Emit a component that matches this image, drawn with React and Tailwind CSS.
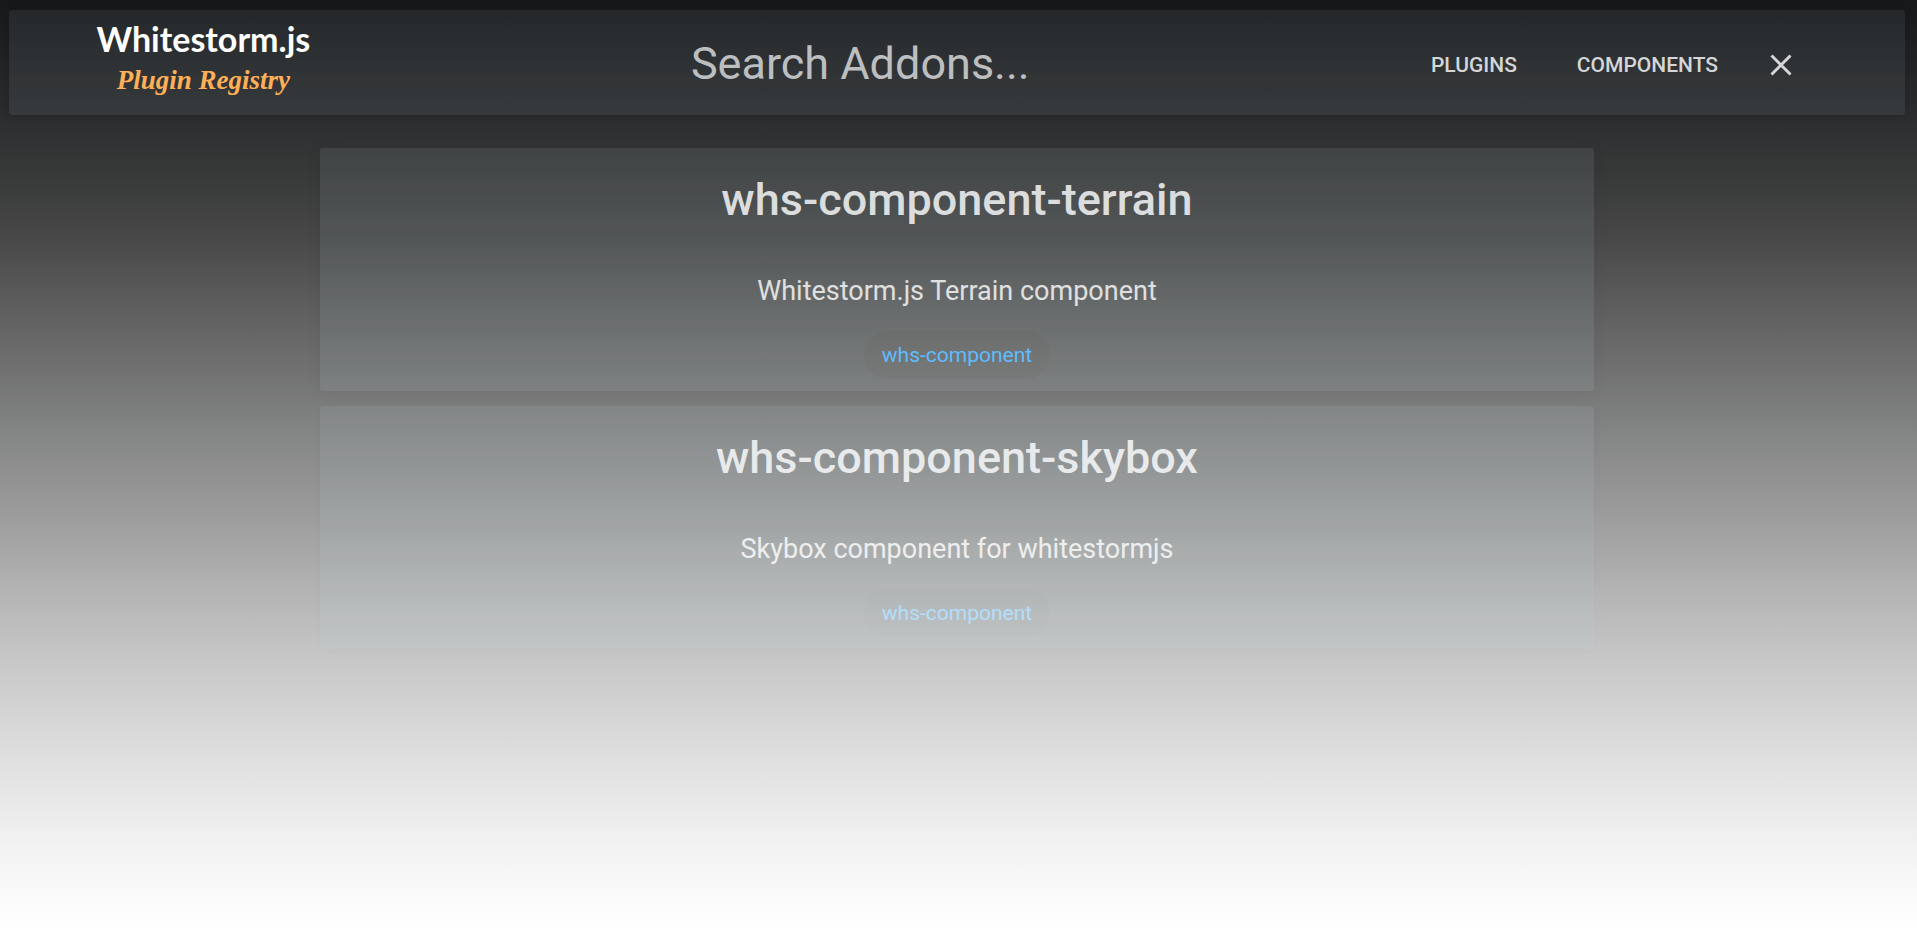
import React from "react";

const addons = [
  {
    name: "whs-component-terrain",
    description: "Whitestorm.js Terrain component",
    tag: "whs-component",
    shadow: "shadow-[0_0_16px_rgba(0,0,0,0.06)]",
    tagStyle: "bg-[#503c3c]/6 text-[#5ebdff]",
  },
  {
    name: "whs-component-skybox",
    description: "Skybox component for whitestormjs",
    tag: "whs-component",
    shadow: "shadow-[0_0_16px_rgba(0,0,0,0.02)]",
    tagStyle: "bg-[#a09c9c]/4 text-[#b2dffc]",
  },
];

function Logo() {
  return (
    <a href="#home" className="flex flex-col items-center whitespace-nowrap">
      <span className="font-['Lato','Open_Sans',sans-serif] text-[34px] leading-[40px] font-bold text-white">
        Whitestorm.js
      </span>
      <span className="font-['Liberation_Serif',serif] text-[27px] leading-[42px] font-bold italic text-[#ffb057]">
        Plugin Registry
      </span>
    </a>
  );
}

function Header() {
  return (
    <header className="grid h-[105px] grid-cols-[20.5%_minmax(0,1fr)_30.7%] items-center rounded-[3px] bg-[#c0dceb]/8 shadow-[0_1px_12px_rgba(0,0,0,0.2)]">
      <div className="flex justify-center pb-1.5">
        <Logo />
      </div>
      <input
        type="text"
        aria-label="Search addons"
        placeholder="Search Addons..."
        className="w-full bg-transparent pt-[3px] text-center text-[45px] leading-[60px] text-white outline-none placeholder:text-[#bcbec0] placeholder:opacity-100"
      />
      <nav className="flex items-center pt-1 pl-[108px] text-[21px] font-medium text-[#d4d6d8]">
        <a href="#plugins" className="pt-0.5">
          PLUGINS
        </a>
        <a href="#components" className="ml-[60px] pt-0.5">
          COMPONENTS
        </a>
        <button type="button" aria-label="Close" className="ml-[47px]">
          <svg viewBox="0 0 32 32" className="size-8" fill="none" stroke="currentColor" strokeWidth="3">
            <path d="M6.500 6.500 25.500 25.500M25.500 6.500 6.500 25.500" />
          </svg>
        </button>
      </nav>
    </header>
  );
}

function AddonCard({ addon }) {
  return (
    <article
      className={`flex flex-col items-center rounded-[3px] bg-[#c8dae4]/10 px-4 pt-[22px] pb-3 text-center ${addon.shadow}`}
    >
      <h2 className="text-[45px] leading-[60px] font-medium text-[#fcfeff]/82">{addon.name}</h2>
      <p className="mt-[43px] text-[27px] leading-9 text-white/80">{addon.description}</p>
      <a
        href="#whs-component"
        className={`mt-[22px] rounded-full px-[18px] text-[21px] leading-[48px] ${addon.tagStyle}`}
      >
        {addon.tag}
      </a>
    </article>
  );
}

export default function App() {
  return (
    <div className="min-h-screen bg-[linear-gradient(to_bottom,#17181a_0%,#2f3031_14%,#383939_19%,#484948_26%,#5a5b5a_32%,#6b6c6b_38%,#7f8080_45%,#9a9b9a_55%,#bcbdbc_67%,#cdcecd_74%,#e1e2e1_83%,#eff0ef_90%,#fafafa_96%,#ffffff_100%)] pt-[10px] pr-3 pl-[9px] font-['Roboto',sans-serif]">
      <Header />
      <main className="mx-auto mt-[33px] flex w-[67.2%] flex-col gap-[15px]">
        {addons.map((addon) => (
          <AddonCard key={addon.name} addon={addon} />
        ))}
      </main>
    </div>
  );
}
